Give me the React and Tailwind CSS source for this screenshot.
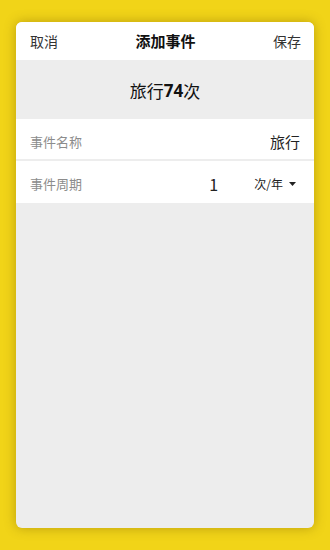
export default function App() {
  return (
    <div
      className="w-[330px] h-[550px] bg-[#f1d418] px-4 pt-[22px] pb-[22px] flex"
      style={{ fontFamily: '"Noto Sans CJK SC", "Noto Sans", sans-serif' }}
    >
      <div className="flex-1 flex flex-col bg-[#ededed] rounded-[6px] overflow-hidden shadow-[0_0_12px_rgba(120,90,0,0.45)]">
        {/* header */}
        <div className="h-[38px] bg-white flex items-center justify-between pl-[14px] pr-[13px] text-[14px] text-[#333]">
          <span>取消</span>
          <span className="text-[15px] font-bold text-[#111]">添加事件</span>
          <span>保存</span>
        </div>

        {/* summary */}
        <div className="h-[59px] flex items-center justify-center pt-[2px] text-[17px] text-[#111]">
          旅行<span className="font-bold" style={{ fontFamily: '"Open Sans", sans-serif' }}>74</span>次
        </div>

        {/* rows */}
        <div className="bg-white">
          <div className="h-[42px] flex items-center justify-between pl-[14px] pr-[14px] pt-[6px] border-b-2 border-[#ededed]">
            <span className="text-[13px] text-[#8c8c8c]">事件名称</span>
            <span className="text-[15px] text-[#222]">旅行</span>
          </div>
          <div className="h-[42px] flex items-center pl-[14px] pr-[18px] pt-[3px]">
            <span className="text-[13px] text-[#8c8c8c]">事件周期</span>
            <span className="ml-auto text-[16px] text-[#222] w-[45px]">1</span>
            <span className="text-[12px] text-[#222] flex items-center gap-[6px]">
              次/年
              <svg width="7" height="4" viewBox="0 0 7 4">
                <path d="M0 0h7L3.5 4z" fill="#222" />
              </svg>
            </span>
          </div>
        </div>
      </div>
    </div>
  );
}
